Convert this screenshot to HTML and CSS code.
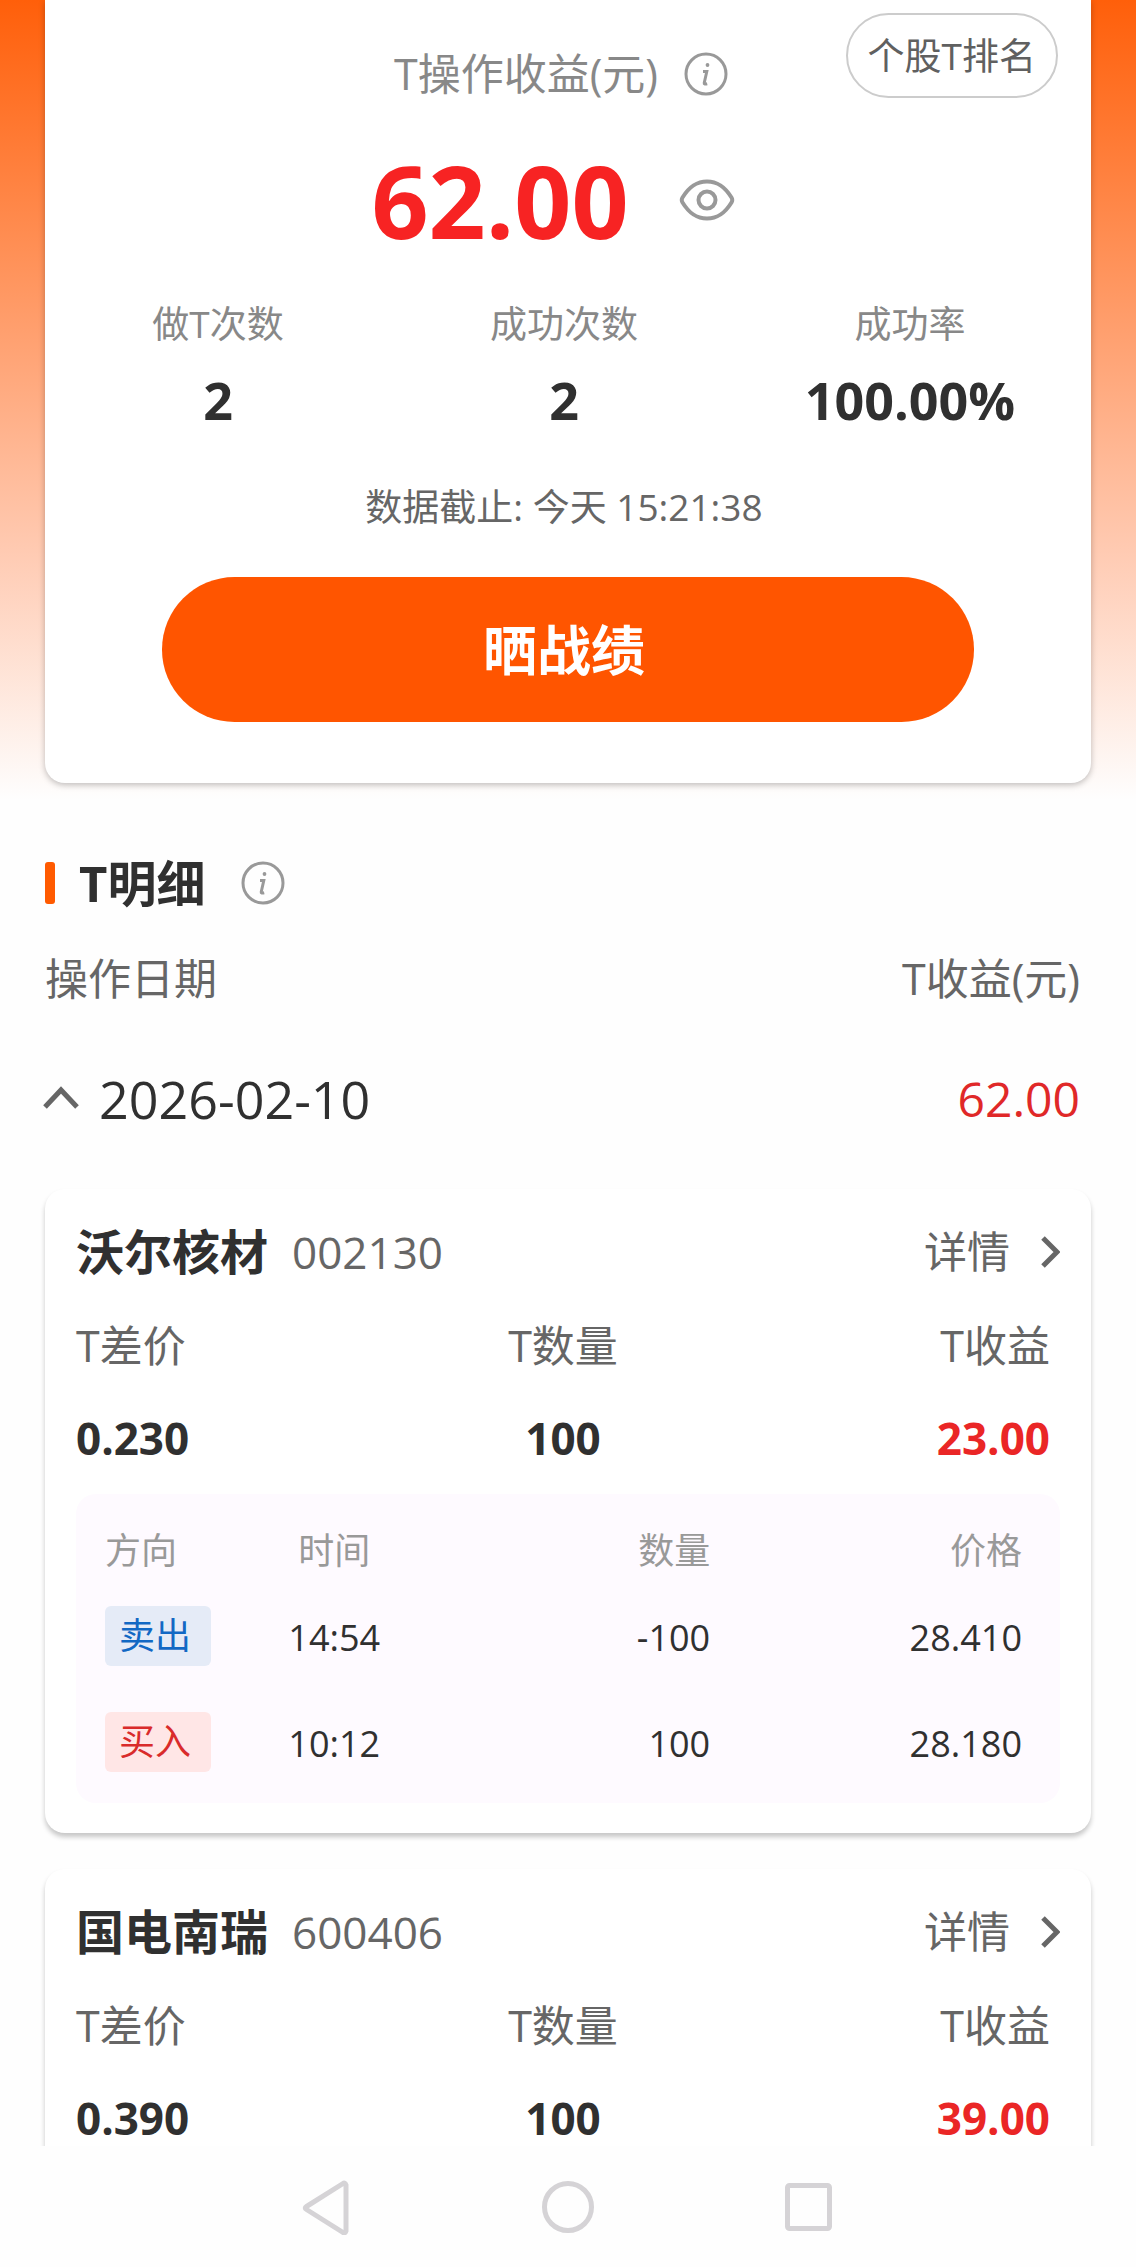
FILE: index.html
```
<!DOCTYPE html>
<html lang="zh-CN">
<head>
    <meta charset="UTF-8">
    <meta name="viewport" content="width=device-width, initial-scale=1">
    <title>T操作收益</title>
    <link rel="stylesheet" href="styles.css">
</head>
<body>
    <main class="content">
        <section class="hero">
            <div class="hero-card">
                <button type="button" class="rank-btn">个股T排名</button>
                <div class="profit-title">
                    <span>T操作收益(元)</span>
                    <button type="button" class="icon-btn" aria-label="收益说明">
                        <svg class="info-icon" viewBox="0 0 44 44">
                            <circle cx="22" cy="22" r="20"/>
                            <path d="M19 19.500h3.800l-2.600 11.500q-.3 1.600 3 .8"/>
                            <circle class="dot" cx="23.500" cy="13" r="1.900"/>
                        </svg>
                    </button>
                </div>
                <div class="profit-value">
                    <strong>62.00</strong>
                    <button type="button" class="icon-btn" aria-label="隐藏金额">
                        <svg class="eye-icon" viewBox="0 0 56 42">
                            <path d="M3.500 18.500C10 8 17 2.500 28 2.500S46 8 52.500 18.500q1.500 2.500 0 5C46 34 39 39.500 28 39.500S10 34 3.500 23.500q-1.500-2.500 0-5z"/>
                            <circle cx="28" cy="21" r="8.500"/>
                        </svg>
                    </button>
                </div>
                <dl class="stats">
                    <div><dt>做T次数</dt><dd>2</dd></div>
                    <div><dt>成功次数</dt><dd>2</dd></div>
                    <div><dt>成功率</dt><dd>100.00%</dd></div>
                </dl>
                <p class="deadline">数据截止: 今天 15:21:38</p>
                <button type="button" class="share-btn">晒战绩</button>
            </div>
        </section>

        <section class="detail">
            <div class="detail-title">
                <h2>T明细</h2>
                <button type="button" class="icon-btn" aria-label="明细说明">
                    <svg class="info-icon" viewBox="0 0 44 44">
                        <circle cx="22" cy="22" r="20"/>
                        <path d="M19 19.500h3.800l-2.600 11.500q-.3 1.600 3 .8"/>
                        <circle class="dot" cx="23.500" cy="13" r="1.900"/>
                    </svg>
                </button>
            </div>
            <div class="list-head">
                <span>操作日期</span>
                <span>T收益(元)</span>
            </div>
            <button type="button" class="day-row" aria-expanded="true">
                <svg class="caret" viewBox="0 0 36 24"><path d="M0 20L16 3l16 17"/></svg>
                <span>2026-02-10</span>
                <span class="day-profit">62.00</span>
            </button>

            <article class="stock-card">
                <header class="stock-head">
                    <h3>沃尔核材</h3>
                    <span class="code">002130</span>
                    <a href="#" class="more">详情
                        <svg class="arrow" viewBox="0 0 20 32"><path d="M3 2l14 14L3 30"/></svg>
                    </a>
                </header>
                <dl class="metrics">
                    <div><dt>T差价</dt><dd>0.230</dd></div>
                    <div><dt>T数量</dt><dd>100</dd></div>
                    <div><dt>T收益</dt><dd class="up">23.00</dd></div>
                </dl>
                <div class="trades">
                    <table>
                        <thead>
                            <tr><th>方向</th><th>时间</th><th>数量</th><th>价格</th></tr>
                        </thead>
                        <tbody>
                            <tr>
                                <td><span class="tag sell">卖出</span></td>
                                <td>14:54</td>
                                <td>-100</td>
                                <td>28.410</td>
                            </tr>
                            <tr>
                                <td><span class="tag buy">买入</span></td>
                                <td>10:12</td>
                                <td>100</td>
                                <td>28.180</td>
                            </tr>
                        </tbody>
                    </table>
                </div>
            </article>

            <article class="stock-card">
                <header class="stock-head">
                    <h3>国电南瑞</h3>
                    <span class="code">600406</span>
                    <a href="#" class="more">详情
                        <svg class="arrow" viewBox="0 0 20 32"><path d="M3 2l14 14L3 30"/></svg>
                    </a>
                </header>
                <dl class="metrics">
                    <div><dt>T差价</dt><dd>0.390</dd></div>
                    <div><dt>T数量</dt><dd>100</dd></div>
                    <div><dt>T收益</dt><dd class="up">39.00</dd></div>
                </dl>
            </article>
        </section>
    </main>

    <nav class="sys-nav">
        <button type="button" class="icon-btn" aria-label="返回">
            <svg viewBox="0 0 56 56"><path d="M47 6v46q-1 3-3 1.500L7.500 30.500q-2.500-1.500 0-3L44 4.500Q46 3 47 6z"/></svg>
        </button>
        <button type="button" class="icon-btn" aria-label="主页">
            <svg viewBox="0 0 56 56"><circle cx="28" cy="28" r="23.500"/></svg>
        </button>
        <button type="button" class="icon-btn" aria-label="最近任务">
            <svg viewBox="0 0 56 56"><rect x="6.500" y="6.500" width="42" height="43" rx="2"/></svg>
        </button>
    </nav>
</body>
</html>
```
FILE: styles.css
```
* {
    box-sizing: border-box;
}
body {
    display: flex;
    flex-direction: column;
    height: 100vh;
    margin: 0;
    font-family: "Open Sans", "Noto Sans CJK SC", sans-serif;
    font-size: 43px;
    line-height: 60px;
    color: #303030;
    background: #fefefe;
}
button {
    padding: 0;
    border: none;
    background: none;
    font: inherit;
    color: inherit;
    cursor: pointer;
}
h2, h3, p, dl, dd {
    margin: 0;
}
svg {
    display: block;
    fill: none;
}
.content {
    flex: 1;
    min-height: 0;
    overflow: hidden;
}

/* profit summary */
.hero {
    padding: 0 45px 17px;
    background: linear-gradient(#ff5f0a, #ff9a66 38%, #ffc9b0 68%, #fefefe);
}
.hero-card {
    position: relative;
    display: flex;
    flex-direction: column;
    align-items: center;
    padding: 44px 0 61px;
    background: #fff;
    border-radius: 0 0 20px 20px;
    box-shadow: 0 2px 6px rgba(0, 0, 0, 0.25);
}
.rank-btn {
    position: absolute;
    top: 13px;
    right: 33px;
    height: 85px;
    padding: 0 20px;
    border: 2px solid #ccc;
    border-radius: 43px;
    font-size: 37px;
    color: #606060;
}
.profit-title {
    display: flex;
    align-items: center;
    gap: 26px;
    padding-right: 14px;
    color: #888;
}
.info-icon {
    width: 44px;
    height: 44px;
    stroke: #999;
    stroke-width: 3;
}
.info-icon .dot {
    fill: #999;
    stroke: none;
}
.profit-value {
    display: flex;
    align-items: center;
    gap: 50px;
    padding-right: 30px;
    margin-top: 36px;
    line-height: 120px;
}
.profit-value strong {
    font-size: 100px;
    color: #f72323;
}
.eye-icon {
    width: 56px;
    height: 42px;
    stroke: #999;
    stroke-width: 4;
}
.stats {
    display: grid;
    grid-template-columns: repeat(3, 1fr);
    width: 100%;
    padding-right: 8px;
    margin-top: 34px;
    text-align: center;
}
.stats dt {
    font-size: 37px;
    color: #888;
}
.stats dd {
    margin-top: 16px;
    font-size: 52px;
    font-weight: bold;
}
.deadline {
    padding-right: 8px;
    margin-top: 47px;
    font-size: 37px;
    color: #666;
}
.share-btn {
    width: calc(100% - 234px);
    height: 145px;
    padding-right: 8px;
    margin-top: 40px;
    border-radius: 73px;
    background: #ff5500;
    font-size: 54px;
    font-weight: bold;
    color: #fff;
}

/* operation list */
.detail {
    padding: 53px 45px 0;
}
.detail-title {
    display: flex;
    align-items: center;
    gap: 36px;
}
h2 {
    display: flex;
    align-items: center;
    gap: 24px;
    font-size: 49px;
}
h2::before {
    content: "";
    width: 10px;
    height: 42px;
    border-radius: 3px;
    background: #ff5a00;
}
.list-head {
    display: flex;
    justify-content: space-between;
    padding-right: 11px;
    margin-top: 36px;
    color: #666;
}
.day-row {
    display: flex;
    align-items: center;
    gap: 18px;
    width: 100%;
    padding-right: 11px;
    margin: 60px 0;
    font-size: 52px;
    text-align: left;
}
.caret {
    width: 36px;
    height: 24px;
    overflow: visible;
    stroke: #666;
    stroke-width: 5;
}
.day-profit {
    margin-left: auto;
    font-size: 48px;
    color: #e02828;
}
.stock-card {
    padding: 33px 31px 30px;
    margin-bottom: 36px;
    background: #fff;
    border-radius: 20px;
    box-shadow: 0 4px 5px rgba(0, 0, 0, 0.22);
}
.stock-head {
    display: flex;
    align-items: center;
    gap: 24px;
}
h3 {
    font-size: 48px;
}
.code {
    font-size: 44px;
    color: #666;
}
.more {
    display: flex;
    align-items: center;
    gap: 30px;
    margin-left: auto;
    color: #666;
    text-decoration: none;
}
.arrow {
    width: 20px;
    height: 32px;
    stroke: #666;
    stroke-width: 5;
}
.metrics {
    display: grid;
    grid-template-columns: repeat(3, 1fr);
    padding-right: 10px;
    margin-top: 34px;
    text-align: center;
}
.metrics div:first-child {
    text-align: left;
}
.metrics div:last-child {
    text-align: right;
}
.metrics dt {
    color: #666;
}
.metrics dd {
    margin-top: 32px;
    font-size: 44px;
    font-weight: bold;
}
.metrics .up {
    color: #ea2626;
}

/* trades of one stock */
.trades {
    padding: 27px 38px 10px 29px;
    margin-top: 26px;
    border-radius: 20px;
    background: #fefaff;
}
table {
    width: 100%;
    table-layout: fixed;
    border-collapse: collapse;
    font-size: 36px;
    text-align: right;
}
th, td {
    height: 106px;
    padding: 8px 0 0;
}
th {
    height: 60px;
    padding: 0;
    font-weight: normal;
    color: #999;
}
th:nth-child(1) {
    width: 12%;
    text-align: left;
}
th:nth-child(2) {
    width: 26%;
}
th:nth-child(3) {
    width: 28%;
}
td:first-child {
    padding: 0;
    text-align: left;
}
th:nth-child(2), td:nth-child(2) {
    text-align: center;
}
.tag {
    display: inline-block;
    padding: 0 20px 0 14px;
    border-radius: 6px;
    vertical-align: middle;
}
.sell {
    color: #1268c4;
    background: #e5ebf7;
}
.buy {
    color: #d92b2b;
    background: #ffe6e6;
}

/* system navigation */
.sys-nav {
    display: flex;
    justify-content: center;
    align-items: center;
    gap: 185px;
    height: 121px;
}
.sys-nav svg {
    width: 56px;
    height: 56px;
    stroke: #d5d3d6;
    stroke-width: 5;
}
```
